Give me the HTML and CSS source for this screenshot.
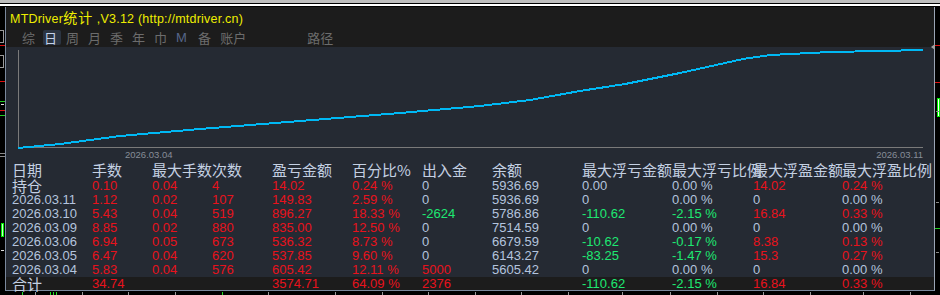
FILE: index.html
```html
<!DOCTYPE html>
<html lang="zh">
<head>
<meta charset="utf-8">
<title>MTDriver统计</title>
<link rel="stylesheet" href="styles.css">
</head>
<body>
<div class="screen">
  <div class="topline"></div>
  <div class="main">
    <div class="side side-left">
      <i class="box" style="top:23px"></i>
      <i class="box" style="top:48px"></i>
      <i class="hl red" style="top:38px"></i>
      <i class="hl red" style="top:74px"></i>
      <i class="hl grn" style="top:94px"></i>
      <i class="hl wht short" style="top:97px"></i>
      <i class="hl red" style="top:103px"></i>
      <i class="hl grn" style="top:108px"></i>
      <i class="hl gry" style="top:146px"></i>
      <i class="hl gry" style="top:149px"></i>
      <i class="candle" style="top:216px"></i>
      <i class="hl wht short" style="top:243px"></i>
    </div>
    <div class="panel">
      <div class="title">MTDriver<span class="tcj">统计</span> ,V3.12 (http://mtdriver.cn)</div>
      <div class="tabs">
        <span class="tab">综</span>
        <span class="tab on">日</span>
        <span class="tab">周</span>
        <span class="tab">月</span>
        <span class="tab">季</span>
        <span class="tab">年</span>
        <span class="tab">巾</span>
        <span class="tab m">M</span>
        <span class="tab">备</span>
        <span class="tab">账户</span>
        <span class="tab far">路径</span>
      </div>
      <div class="chart">
        <svg width="928" height="116" viewBox="6 47 928 116" xmlns="http://www.w3.org/2000/svg">
          <path d="M18.5 50 V147.5 H923" stroke="#7a7a7a" stroke-width="1" fill="none"/>
          <polyline fill="none" stroke="#00b8f4" stroke-width="2" shape-rendering="crispEdges"
            points="18,148 60,144 120,136 200,129 300,121 400,113 480,106 530,100 580,91 625,84 680,73 743,59 770,55 830,52 880,51 923,50"/>
          <text x="125" y="158" class="axl">2026.03.04</text>
          <text x="923" y="158" class="axl" text-anchor="end">2026.03.11</text>
        </svg>
      </div>
      <div class="table">
        <div class="row head">
          <span>日期</span><span>手数</span><span>最大手数</span><span>次数</span><span>盈亏金额</span><span>百分比%</span><span>出入金</span><span>余额</span><span>最大浮亏金额</span><span>最大浮亏比例</span><span>最大浮盈金额</span><span>最大浮盈比例</span>
        </div>
        <div class="row">
          <span class="cj">持仓</span><span class="r">0.10</span><span class="r">0.04</span><span class="r">4</span><span class="r">14.02</span><span class="r">0.24 %</span><span class="b">0</span><span class="b">5936.69</span><span class="b">0.00</span><span class="b">0.00 %</span><span class="r">14.02</span><span class="r">0.24 %</span>
        </div>
        <div class="row">
          <span class="b">2026.03.11</span><span class="r">1.12</span><span class="r">0.02</span><span class="r">107</span><span class="r">149.83</span><span class="r">2.59 %</span><span class="b">0</span><span class="b">5936.69</span><span class="b">0</span><span class="b">0.00 %</span><span class="b">0</span><span class="b">0.00 %</span>
        </div>
        <div class="row">
          <span class="b">2026.03.10</span><span class="r">5.43</span><span class="r">0.04</span><span class="r">519</span><span class="r">896.27</span><span class="r">18.33 %</span><span class="g">-2624</span><span class="b">5786.86</span><span class="g">-110.62</span><span class="g">-2.15 %</span><span class="r">16.84</span><span class="r">0.33 %</span>
        </div>
        <div class="row">
          <span class="b">2026.03.09</span><span class="r">8.85</span><span class="r">0.02</span><span class="r">880</span><span class="r">835.00</span><span class="r">12.50 %</span><span class="b">0</span><span class="b">7514.59</span><span class="b">0</span><span class="b">0.00 %</span><span class="b">0</span><span class="b">0.00 %</span>
        </div>
        <div class="row">
          <span class="b">2026.03.06</span><span class="r">6.94</span><span class="r">0.05</span><span class="r">673</span><span class="r">536.32</span><span class="r">8.73 %</span><span class="b">0</span><span class="b">6679.59</span><span class="g">-10.62</span><span class="g">-0.17 %</span><span class="r">8.38</span><span class="r">0.13 %</span>
        </div>
        <div class="row">
          <span class="b">2026.03.05</span><span class="r">6.47</span><span class="r">0.04</span><span class="r">620</span><span class="r">537.85</span><span class="r">9.60 %</span><span class="b">0</span><span class="b">6143.27</span><span class="g">-83.25</span><span class="g">-1.47 %</span><span class="r">15.3</span><span class="r">0.27 %</span>
        </div>
        <div class="row">
          <span class="b">2026.03.04</span><span class="r">5.83</span><span class="r">0.04</span><span class="r">576</span><span class="r">605.42</span><span class="r">12.11 %</span><span class="r">5000</span><span class="b">5605.42</span><span class="b">0</span><span class="b">0.00 %</span><span class="b">0</span><span class="b">0.00 %</span>
        </div>
        <div class="row total">
          <span class="cj">合计</span><span class="r">34.74</span><span></span><span></span><span class="r">3574.71</span><span class="r">64.09 %</span><span class="r">2376</span><span></span><span class="g">-110.62</span><span class="g">-2.15 %</span><span class="r">16.84</span><span class="r">0.33 %</span>
        </div>
      </div>
    </div>
    <div class="side side-right">
      <i class="arrow"></i>
      <i class="hl red" style="top:38px"></i>
      <i class="hl red" style="top:75px"></i>
      <i class="candle r" style="top:91px"></i>
      <i class="hl gry short" style="top:104px"></i>
      <i class="hl gry short" style="top:195px"></i>
      <i class="hl grn" style="top:221px"></i>
      <i class="hl gry short" style="top:245px"></i>
    </div>
  </div>
  <div class="bottom">
    <i class="tk g" style="left:22px"></i>
    <i class="tk g" style="left:50px"></i>
    <i class="tk g" style="left:53px"></i>
    <i class="tk g" style="left:56px"></i>
    <i class="tk g" style="left:222px"></i>
    <i class="tk" style="left:35px"></i>
    <i class="tk" style="left:82px"></i>
    <i class="tk" style="left:128px"></i>
    <i class="tk" style="left:175px"></i>
    <i class="tk" style="left:268px"></i>
    <i class="tk" style="left:335px"></i>
    <i class="tk" style="left:382px"></i>
    <i class="tk" style="left:428px"></i>
    <i class="tk" style="left:475px"></i>
    <i class="tk" style="left:521px"></i>
    <i class="tk" style="left:568px"></i>
    <i class="tk" style="left:622px"></i>
    <i class="tk" style="left:670px"></i>
    <i class="tk" style="left:717px"></i>
    <i class="tk" style="left:763px"></i>
    <i class="tk" style="left:810px"></i>
    <i class="tk" style="left:863px"></i>
    <i class="tk" style="left:910px"></i>
  </div>
</div>
</body>
</html>
```

FILE: styles.css
```css
* {
  box-sizing: border-box;
  margin: 0;
  padding: 0;
}

html,
body {
  background: #000;
}

body {
  width: 940px;
  height: 295px;
  overflow: hidden;
  font-family: "Liberation Sans", Arial, "Noto Sans CJK SC", sans-serif;
}

.screen {
  width: 940px;
  height: 295px;
  display: flex;
  flex-direction: column;
}

.topline {
  flex: none;
  height: 7px;
  background: linear-gradient(to bottom, #bdbdbd 0 3px, #000 3px 4px, #fff 4px 6px, #000 6px 7px);
}

.main {
  flex: none;
  height: 284px;
  display: flex;
}

.side {
  flex: none;
  width: 5px;
  position: relative;
}

.side i {
  position: absolute;
  display: block;
}

.hl {
  left: 0;
  width: 5px;
  height: 1px;
}

.hl.short {
  left: 1px;
  width: 3px;
}

.red { background: #e01010; }
.grn { background: #22cc22; }
.wht { background: #e0e0e0; }
.gry { background: #8a8a8a; }

.box {
  left: 0;
  width: 4px;
  height: 13px;
  border: 1px solid #9a9a9a;
  border-left: none;
}

.candle {
  left: 1px;
  width: 3px;
  height: 14px;
  border: 1px solid #00ee00;
  background: #ccffcc;
}

.candle.r {
  left: 2px;
  height: 19px;
  background: #fff;
}

.arrow {
  top: 37px;
  left: -4px;
  width: 0;
  height: 0;
  border-top: 3px solid transparent;
  border-bottom: 3px solid transparent;
  border-right: 4px solid #a0a0a0;
}

.panel {
  flex: none;
  width: 930px;
  height: 284px;
  background: #252a33;
  border-left: 1px solid #7a889c;
  border-right: 1px solid #9aa4b4;
  border-bottom: 1px solid #7a889c;
  display: flex;
  flex-direction: column;
}

.title {
  flex: none;
  height: 21px;
  line-height: 21px;
  padding-left: 4px;
  background: #1c1c1c;
  color: #eeee00;
  font-size: 12.5px;
  letter-spacing: 0.22px;
  white-space: nowrap;
}

.tcj {
  font-family: "Noto Sans CJK SC", sans-serif;
  font-size: 14px;
  letter-spacing: 1px;
}

.tabs {
  flex: none;
  height: 19px;
  background: #1c1c1c;
  display: flex;
  align-items: center;
  gap: 4px;
  padding-left: 15px;
}

.tab {
  font-family: "Noto Sans CJK SC", sans-serif;
  font-size: 13px;
  line-height: 15px;
  height: 15px;
  min-width: 18px;
  padding: 0 4px 0 1px;
  color: #6c6c6c;
  border-radius: 2px;
}

.tab.on {
  background: #2b3441;
  color: #c4d2ea;
}

.tab.m {
  font-family: "Liberation Sans", Arial, sans-serif;
  color: #56668a;
}

.tab.far {
  margin-left: 52px;
}

.chart {
  flex: none;
  height: 116px;
}

.chart svg {
  display: block;
}

.axl {
  font-family: "Liberation Sans", Arial, sans-serif;
  font-size: 9.5px;
  fill: #878d98;
}

.table {
  flex: none;
  font-size: 13px;
}

.row {
  display: grid;
  grid-template-columns: 80px 60px 60px 60px 80px 70px 70px 90px 90px 81px 89px 1fr;
  padding-left: 6px;
  height: 14px;
  line-height: 14px;
  white-space: nowrap;
}

.head {
  height: 16px;
  line-height: 14px;
  font-family: "Noto Sans CJK SC", sans-serif;
  font-size: 15px;
  color: #c4d0e2;
}

.cj {
  font-family: "Noto Sans CJK SC", sans-serif;
  font-size: 15px;
  color: #c4d0e2;
}

.total {
  height: 13px;
  line-height: 13px;
  background: #1c1c1c;
}

.r { color: #e8121c; }
.g { color: #1ee872; }
.b { color: #b4c4de; }

.bottom {
  flex: none;
  height: 4px;
  position: relative;
}

.tk {
  position: absolute;
  top: 1px;
  width: 1px;
  height: 3px;
  background: #9a9a9a;
}

.tk.g {
  background: #22dd22;
}
```
